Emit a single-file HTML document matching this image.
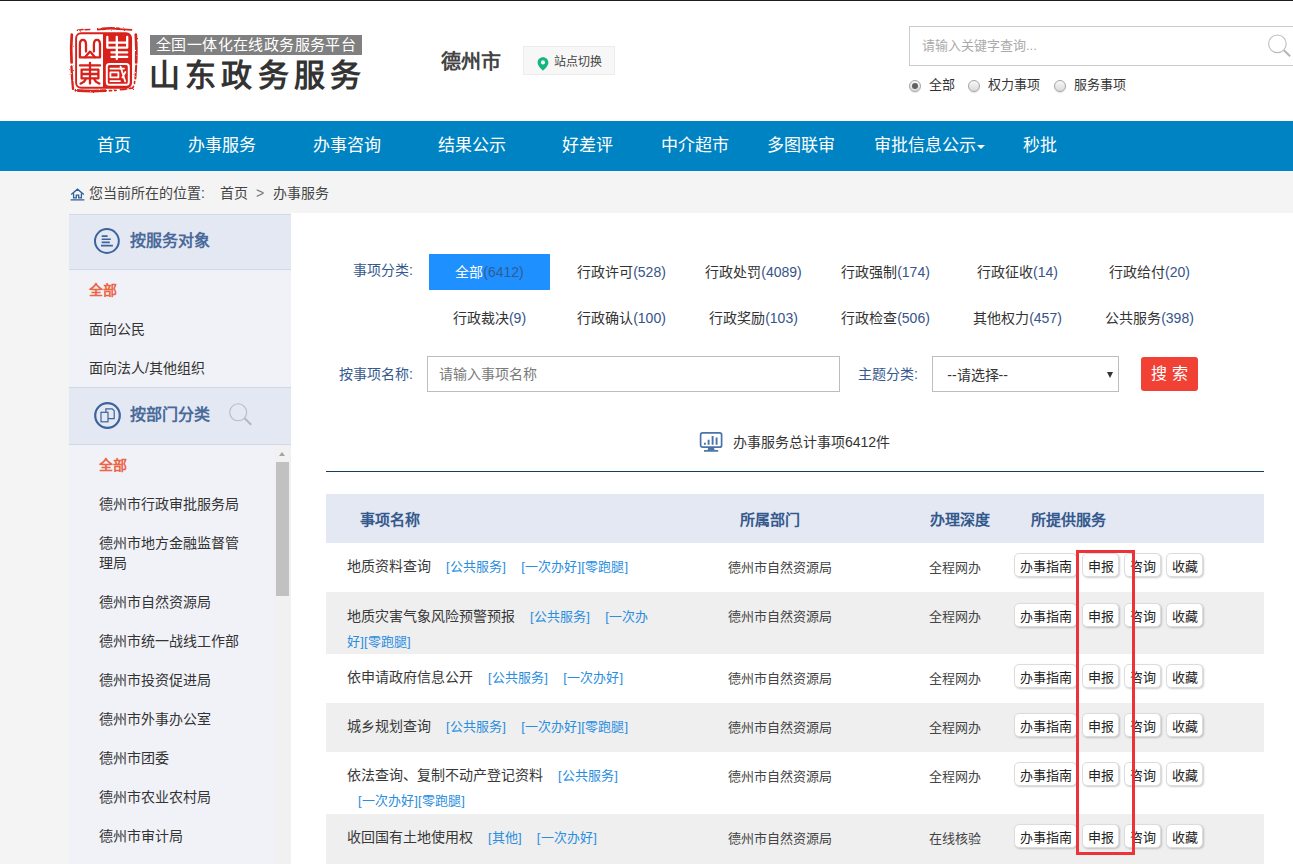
<!DOCTYPE html>
<html lang="zh-CN">
<head>
<meta charset="utf-8">
<title>山东政务服务 - 办事服务</title>
<style>
*{box-sizing:border-box;margin:0;padding:0}
html,body{width:1293px;height:864px;overflow:hidden;background:#fff}
body{font-family:"Liberation Sans",sans-serif;font-size:14px;color:#333;position:relative}
a{color:inherit;text-decoration:none}
ul{list-style:none}
.abs{position:absolute}
/* ---------- top / header ---------- */
#topline{left:0;top:0;width:1293px;height:1px;background:#1c1c1c}
#seal{left:64px;top:22px;width:80px;height:76px}
#slogan{left:150px;top:35px;width:212px;height:20px;background:#808080;color:#fff;font-size:15px;line-height:20px;letter-spacing:.4px;padding-left:6px;white-space:nowrap}
#brand{left:149px;top:55.9px;height:40px;line-height:40px;font-size:31px;font-weight:bold;letter-spacing:5.2px;color:#333;white-space:nowrap}
#city{left:441px;top:47.3px;height:30px;line-height:30px;font-size:20px;font-weight:bold;color:#444;white-space:nowrap}
#switch{left:523px;top:46px;width:92px;height:29px;background:#f7f7f7;border:1px solid #ececec;font-size:12px;line-height:27px;color:#444;white-space:nowrap}
#switch svg{position:absolute;left:13px;top:9.5px}
#switch span{position:absolute;left:30.3px;top:2px}
#sbox{left:909px;top:26px;width:400px;height:40px;border:1px solid #ccc;background:#fff}
#sbox span{position:absolute;left:12px;top:0;line-height:38px;font-size:13px;color:#aaa}
#sbox svg{position:absolute;left:357px;top:5.5px}
.radio{width:12px;height:12px;border-radius:50%;border:1px solid #a6a6a6;background:linear-gradient(#f8f8f8,#dadada);top:79.5px;box-shadow:0 1px 1px rgba(0,0,0,.12)}
.radio.on:after{content:"";position:absolute;left:2px;top:2px;width:6px;height:6px;border-radius:50%;background:#606060}
.rlabel{top:75px;line-height:20px;font-size:13px;color:#333;white-space:nowrap}
/* ---------- nav ---------- */
#nav{left:0;top:121px;width:1293px;height:50px;background:#0083c3}
#nav a{position:absolute;top:0;width:140px;text-align:center;line-height:50px;font-size:17px;color:#fff;white-space:nowrap}
#nav i{position:absolute;top:24px;left:977px;width:0;height:0;border-left:4px solid transparent;border-right:4px solid transparent;border-top:4px solid #fff}
/* ---------- breadcrumb ---------- */
#crumbbg{left:0;top:171px;width:1293px;height:693px;background:#f4f4f4}
#crumb{left:69px;top:183px;height:20px;line-height:20px;font-size:14px;color:#444;white-space:nowrap}
#crumb span{position:absolute;top:0}
/* ---------- sidebar ---------- */
#side{left:69px;top:214px;width:222px;height:650px;background:#f0f2f7}
.shead{left:0;width:222px;background:#e4e8f3;border-top:1px solid #d3d8e8;border-bottom:1px solid #d3d8e8}
.shead b{position:absolute;font-size:16px;color:#4a6a9a;white-space:nowrap;line-height:24px}
.shead svg{position:absolute}
.sitem{font-size:14px;color:#333;line-height:20px;white-space:nowrap}
.sitem.on{color:#ec6546;font-weight:bold}
/* ---------- main ---------- */
#main{left:291px;top:213px;width:1002px;height:651px;background:#fff}
</style>
</head>
<body>
<div class="abs" id="crumbbg"></div>
<div class="abs" style="left:0;top:0;width:1293px;height:121px;background:#fff"></div>
<div class="abs" id="topline"></div>

<!-- seal logo -->
<svg class="abs" id="seal" viewBox="0 0 80 76">
<defs><filter id="rough" x="-5%" y="-5%" width="110%" height="110%"><feTurbulence type="fractalNoise" baseFrequency="0.55" numOctaves="2" seed="7" result="n"/><feDisplacementMap in="SourceGraphic" in2="n" scale="2.2" xChannelSelector="R" yChannelSelector="G"/></filter></defs>
<g fill="none" stroke="#d8211b" stroke-linecap="round" stroke-linejoin="round" filter="url(#rough)">
  <!-- rough outer border -->
  <path d="M13.4 8.2L19 7.6M21 7.7L25.8 7.4" stroke-width="1.5"/>
  <path d="M33.8 7.7L38.5 7" stroke-width="1.8"/>
  <path d="M38.5 6.9Q46 5.6 55 6.7" stroke-width="2.6"/>
  <path d="M55 7.2L67.6 7.8" stroke-width="1.7"/>
  <path d="M7.8 12.5Q6.6 26 7.6 40.5" stroke-width="2.7"/>
  <path d="M7.5 44.5Q7.9 56 9 66.8" stroke-width="2.3"/>
  <path d="M71.8 12.5Q72.8 26 72.2 40.5" stroke-width="2.7"/>
  <path d="M72.2 43.5L71.4 56.5" stroke-width="2"/>
  <path d="M70.7 59.5L70.5 61.5M69.4 64.5L68.6 66.2" stroke-width="1.7"/>
  <path d="M11.8 68.4Q26 69.6 41.6 68.7" stroke-width="2.7"/>
  <path d="M45.5 68.7L47.5 68.6M50.5 68.4L52 68.3M56.5 67.7L62.5 67.2M65.5 66.7L67.2 66.2" stroke-width="1.8"/>
</g>
<rect x="12.1" y="11.2" width="55" height="54.6" rx="5" fill="none" stroke="#d8211b" stroke-width="1.9"/>
<path d="M39 11H62.3a5 5 0 0 1 5 5V61a5 5 0 0 1-5 5H39z" fill="#d8211b"/>
<g fill="none" stroke="#d8211b" stroke-width="2.3" stroke-linecap="round" stroke-linejoin="round">
  <!-- shan -->
  <path d="M22 29.5V22.6Q22 17.8 18.9 17.8Q15.9 17.8 15.9 22.6V35.4H36V22.6Q36 17.8 33 17.8Q29.9 17.8 29.9 22.6V29.5"/>
  <path d="M21 35.2L26 29.6L31 35.2"/>
  <!-- dong -->
  <path d="M26 40.8V61.6M16 43.4H36M17.6 47.6H34.4V56.4H17.6zM17.6 52H34.4"/>
  <path d="M21.8 56.8Q20.8 60.2 16.6 61.6M30.2 56.8Q31.2 60.2 35.4 61.6"/>
</g>
<g fill="none" stroke="#fff" stroke-width="2.3" stroke-linecap="round" stroke-linejoin="round">
  <!-- zhong -->
  <path d="M52.8 15V37M43.3 15V25.6H63.2V15M43.3 20.6H63.2M47.5 30.4H63.2M47.5 34.9H63.2"/>
  <!-- guo -->
  <rect x="42.8" y="42" width="22" height="20.8" rx="2.6" stroke-width="2"/>
  <path d="M46.4 46.6H60M46.4 50.4H54.4V55.4H46.4zM46.4 59.1H56M56.5 44.6L61.2 59.4M61.4 50L58.4 55.4" stroke-width="1.8"/>
</g>
</svg>
<div class="abs" id="slogan">全国一体化在线政务服务平台</div>
<div class="abs" id="brand">山东政务服务</div>
<div class="abs" id="city">德州市</div>
<div class="abs" id="switch">
  <svg width="12" height="14" viewBox="0 0 12 14"><path d="M6 0.3C2.9 0.3 0.6 2.6 0.6 5.5c0 3.4 4 6.9 5.4 8.2 1.4-1.3 5.4-4.8 5.4-8.2C11.4 2.6 9.1 0.3 6 0.3z" fill="#12b67f"/><circle cx="6" cy="5.4" r="2.1" fill="#f7f7f7"/></svg>
  <span>站点切换</span>
</div>
<div class="abs" id="sbox"><span>请输入关键字查询...</span>
  <svg width="30" height="26" viewBox="0 0 30 26"><circle cx="10.4" cy="10.8" r="8.8" fill="none" stroke="#bcbcbc" stroke-width="1.1"/><path d="M16.9 17.3L23.1 23.3" stroke="#b4b4b4" stroke-width="2"/></svg>
</div>
<div class="abs radio on" style="left:909px"></div><div class="abs rlabel" style="left:929px">全部</div>
<div class="abs radio" style="left:968px"></div><div class="abs rlabel" style="left:988px">权力事项</div>
<div class="abs radio" style="left:1054px"></div><div class="abs rlabel" style="left:1074px">服务事项</div>

<!-- nav -->
<div class="abs" id="nav">
  <a style="left:44.3px">首页</a>
  <a style="left:151.5px">办事服务</a>
  <a style="left:276.7px">办事咨询</a>
  <a style="left:402.0px">结果公示</a>
  <a style="left:517.6px">好差评</a>
  <a style="left:625.4px">中介超市</a>
  <a style="left:731.0px">多图联审</a>
  <a style="left:854.9px">审批信息公示</a>
  <a style="left:970.4px">秒批</a>
  <i></i>
</div>

<!-- breadcrumb -->
<div class="abs" id="crumb">
  <svg class="abs" style="left:1px;top:4.7px" width="15" height="13" viewBox="0 0 15 13"><path d="M1.2 6.6L7.5 1.2l6.3 5.4M3.6 5.4v4.4h2.7V7.2h2.4v2.6h2.7V5.4M0.6 11.9h13.8" fill="none" stroke="#2f5f9a" stroke-width="1.3"/></svg>
  <span style="left:20px">您当前所在的位置:</span>
  <span style="left:151px">首页</span>
  <span style="left:187px;color:#777">&gt;</span>
  <span style="left:204px">办事服务</span>
</div>

<!-- sidebar -->
<div class="abs" id="side">
  <div class="abs shead" style="top:0;height:56px">
    <svg style="left:24px;top:12.1px" width="28" height="28" viewBox="0 0 28 28"><circle cx="13.9" cy="14" r="11.9" fill="none" stroke="#3b639c" stroke-width="2"/><path d="M8.7 9.1H14.6M8.7 12.3H17.8M8.7 15.4H16.8M8 18.6H19.9" stroke="#3b639c" stroke-width="1.6"/></svg>
    <b style="left:60.5px;top:14px">按服务对象</b>
  </div>
  <div class="abs sitem on" style="left:20px;top:66px">全部</div>
  <div class="abs sitem" style="left:20px;top:105px">面向公民</div>
  <div class="abs sitem" style="left:20px;top:144px">面向法人/其他组织</div>
  <div class="abs shead" style="top:173px;height:58px">
    <svg style="left:24px;top:14px" width="29" height="28" viewBox="0 0 29 28"><circle cx="14.5" cy="13.5" r="12.3" fill="none" stroke="#3b639c" stroke-width="2.2"/><path d="M12.9 6.8H19.2L21.2 8.8V16.6H12.9z" fill="none" stroke="#3b639c" stroke-width="1.2"/><rect x="8" y="10.3" width="7" height="9.5" fill="#e4e8f3" stroke="#3b639c" stroke-width="1.2"/></svg>
    <b style="left:61px;top:15px">按部门分类</b>
    <svg style="left:158px;top:14px" width="27" height="26" viewBox="0 0 27 26"><circle cx="11.2" cy="10.3" r="8.5" fill="none" stroke="#b9bbc2" stroke-width="1.1"/><path d="M17.6 16.3L24.2 22.8" stroke="#b4b6bd" stroke-width="1.9"/></svg>
  </div>
  <div class="abs sitem on" style="left:30px;top:241px">全部</div>
  <div class="abs sitem" style="left:30px;top:280px">德州市行政审批服务局</div>
  <div class="abs sitem" style="left:30px;top:319px">德州市地方金融监督管<br>理局</div>
  <div class="abs sitem" style="left:30px;top:378px">德州市自然资源局</div>
  <div class="abs sitem" style="left:30px;top:417px">德州市统一战线工作部</div>
  <div class="abs sitem" style="left:30px;top:456px">德州市投资促进局</div>
  <div class="abs sitem" style="left:30px;top:495px">德州市外事办公室</div>
  <div class="abs sitem" style="left:30px;top:534px">德州市团委</div>
  <div class="abs sitem" style="left:30px;top:573px">德州市农业农村局</div>
  <div class="abs sitem" style="left:30px;top:612px">德州市审计局</div>
  <!-- scrollbar -->
  <div class="abs" style="left:205px;top:231px;width:17px;height:419px;background:#f1f1f1"></div>
  <div class="abs" style="left:209.9px;top:238px;width:0;height:0;border-left:3.6px solid transparent;border-right:3.6px solid transparent;border-bottom:4px solid #a3a3a3"></div>
  <div class="abs" style="left:207px;top:248px;width:13px;height:134px;background:#c1c1c1"></div>
</div>

<!-- main -->
<div class="abs" id="main">

<style>
#main .lbl{position:absolute;font-size:14px;color:#35598e;white-space:nowrap;line-height:20px}
.cat{position:absolute;width:121px;height:36px;line-height:36px;text-align:center;font-size:14px;color:#333;white-space:nowrap}
.cat em{font-style:normal;color:#36538a}
.cat.on{background:#1e90ff;color:#fff}
.cat.on em{color:#335c93}
#kw{left:136px;top:143px;width:413px;height:36px;border:1px solid #bdbdbd;background:#fff}
#kw span{position:absolute;left:11px;top:0;line-height:34px;font-size:14px;color:#7a7a7a}
#sel{left:641px;top:143px;width:187px;height:36px;border:1px solid #bdbdbd;background:#fff}
#sel span{position:absolute;left:14.3px;top:0;line-height:36px;font-size:14px;color:#333}
#sel i{position:absolute;left:173.5px;top:14.5px;width:0;height:0;border-left:3.2px solid transparent;border-right:3.2px solid transparent;border-top:6px solid #333}
#go{left:850px;top:144px;width:57px;height:34px;border-radius:3px;background:#f04134;color:#fff;font-size:16px;line-height:33px;text-align:center;white-space:nowrap}
#stat{left:442px;top:219px;line-height:20px;font-size:14px;color:#333;white-space:nowrap}
#rule{left:35px;top:258px;width:938px;height:1px;background:#14405c}
#thead{left:35px;top:281px;width:938px;height:49px;background:#e4e8f3}
#thead b{position:absolute;top:15.2px;line-height:22px;font-size:15px;color:#34598c;white-space:nowrap}
.rbg{position:absolute;left:35px;width:938px;background:#efefef}
.n{position:absolute;left:56px;line-height:24.4px;font-size:14px;color:#383838;white-space:nowrap}
.n a{font-size:13px;color:#2a8ee0;letter-spacing:.15px}
.n a.s{margin-left:15px}
.d{position:absolute;left:385px;width:208px;text-align:center;line-height:25px;font-size:13px;color:#444;white-space:nowrap}
.p{position:absolute;left:638px;line-height:25px;font-size:13px;color:#444;white-space:nowrap}
.b{position:absolute;height:24px;border:1px solid #dcdcdc;border-radius:5px;background:#fff;box-shadow:1px 1px 2px rgba(0,0,0,.2);font-size:13px;line-height:26px;color:#222;text-align:center;white-space:nowrap}
.b1{left:723px;width:63px}.b2{left:791px;width:37px}.b3{left:833px;width:37px}.b4{left:875px;width:37px}
#redbox{left:785px;top:337px;width:59px;height:305px;border:3px solid #ee3338}
</style>
<div class="lbl" style="left:62px;top:47px">事项分类:</div>
<div class="cat on" style="left:138px;top:41px">全部<em>(6412)</em></div>
<div class="cat" style="left:270px;top:41px">行政许可<em>(528)</em></div>
<div class="cat" style="left:402px;top:41px">行政处罚<em>(4089)</em></div>
<div class="cat" style="left:534px;top:41px">行政强制<em>(174)</em></div>
<div class="cat" style="left:666px;top:41px">行政征收<em>(14)</em></div>
<div class="cat" style="left:798px;top:41px">行政给付<em>(20)</em></div>
<div class="cat" style="left:138px;top:87px">行政裁决<em>(9)</em></div>
<div class="cat" style="left:270px;top:87px">行政确认<em>(100)</em></div>
<div class="cat" style="left:402px;top:87px">行政奖励<em>(103)</em></div>
<div class="cat" style="left:534px;top:87px">行政检查<em>(506)</em></div>
<div class="cat" style="left:666px;top:87px">其他权力<em>(457)</em></div>
<div class="cat" style="left:798px;top:87px">公共服务<em>(398)</em></div>

<div class="lbl" style="left:48px;top:151px">按事项名称:</div>
<div class="abs" id="kw"><span>请输入事项名称</span></div>
<div class="lbl" style="left:567px;top:151px">主题分类:</div>
<div class="abs" id="sel"><span>--请选择--</span><i></i></div>
<div class="abs" id="go">搜 索</div>

<svg class="abs" style="left:408px;top:218px" width="24" height="22" viewBox="0 0 24 22"><rect x="1.6" y="1.9" width="21" height="14.3" rx="2" fill="none" stroke="#4a73a8" stroke-width="1.7"/><path d="M5.9 13.8V11.8M9.6 13.8V8.8M13.6 13.8V5M17.6 13.8V6.6" stroke="#4a73a8" stroke-width="1.9"/><path d="M9.3 16.6h5.6l0.8 2.6H8.5z" fill="#4a73a8"/><path d="M5 19.9h14.2" stroke="#4a73a8" stroke-width="1.7"/></svg>
<div class="abs" id="stat">办事服务总计事项6412件</div>
<div class="abs" id="rule"></div>

<div class="abs" id="thead">
  <b style="left:34px">事项名称</b>
  <b style="left:414px">所属部门</b>
  <b style="left:604px">办理深度</b>
  <b style="left:705px">所提供服务</b>
</div>
<div class="n" style="top:341.45px">地质资料查询<a class="s">[公共服务]</a><a class="s">[一次办好][零跑腿]</a></div><div class="d" style="top:342.20px">德州市自然资源局</div><div class="p" style="top:342.20px">全程网办</div><div class="b b1" style="top:340px">办事指南</div><div class="b b2" style="top:340px">申报</div><div class="b b3" style="top:340px">咨询</div><div class="b b4" style="top:340px">收藏</div>
<div class="rbg" style="top:379px;height:62px"></div>
<div class="n" style="top:390.65px">地质灾害气象风险预警预报<a class="s">[公共服务]</a><a class="s">[一次办</a><br><a>好][零跑腿]</a></div><div class="d" style="top:391.40px">德州市自然资源局</div><div class="p" style="top:391.40px">全程网办</div><div class="b b1" style="top:390px">办事指南</div><div class="b b2" style="top:390px">申报</div><div class="b b3" style="top:390px">咨询</div><div class="b b4" style="top:390px">收藏</div>
<div class="n" style="top:452.15px">依申请政府信息公开<a class="s">[公共服务]</a><a class="s">[一次办好]</a></div><div class="d" style="top:452.90px">德州市自然资源局</div><div class="p" style="top:452.90px">全程网办</div><div class="b b1" style="top:451px">办事指南</div><div class="b b2" style="top:451px">申报</div><div class="b b3" style="top:451px">咨询</div><div class="b b4" style="top:451px">收藏</div>
<div class="rbg" style="top:490px;height:49px"></div>
<div class="n" style="top:501.35px">城乡规划查询<a class="s">[公共服务]</a><a class="s">[一次办好][零跑腿]</a></div><div class="d" style="top:502.10px">德州市自然资源局</div><div class="p" style="top:502.10px">全程网办</div><div class="b b1" style="top:500px">办事指南</div><div class="b b2" style="top:500px">申报</div><div class="b b3" style="top:500px">咨询</div><div class="b b4" style="top:500px">收藏</div>
<div class="n" style="top:549.95px">依法查询、复制不动产登记资料<a class="s">[公共服务]</a><br><a style="margin-left:11px">[一次办好][零跑腿]</a></div><div class="d" style="top:551.30px">德州市自然资源局</div><div class="p" style="top:551.30px">全程网办</div><div class="b b1" style="top:549px">办事指南</div><div class="b b2" style="top:549px">申报</div><div class="b b3" style="top:549px">咨询</div><div class="b b4" style="top:549px">收藏</div>
<div class="rbg" style="top:601px;height:50px"></div>
<div class="n" style="top:612.15px">收回国有土地使用权<a class="s">[其他]</a><a class="s">[一次办好]</a></div><div class="d" style="top:612.90px">德州市自然资源局</div><div class="p" style="top:612.90px">在线核验</div><div class="b b1" style="top:611px">办事指南</div><div class="b b2" style="top:611px">申报</div><div class="b b3" style="top:611px">咨询</div><div class="b b4" style="top:611px">收藏</div>
<div class="abs" id="redbox"></div>

</div>
</body>
</html>
